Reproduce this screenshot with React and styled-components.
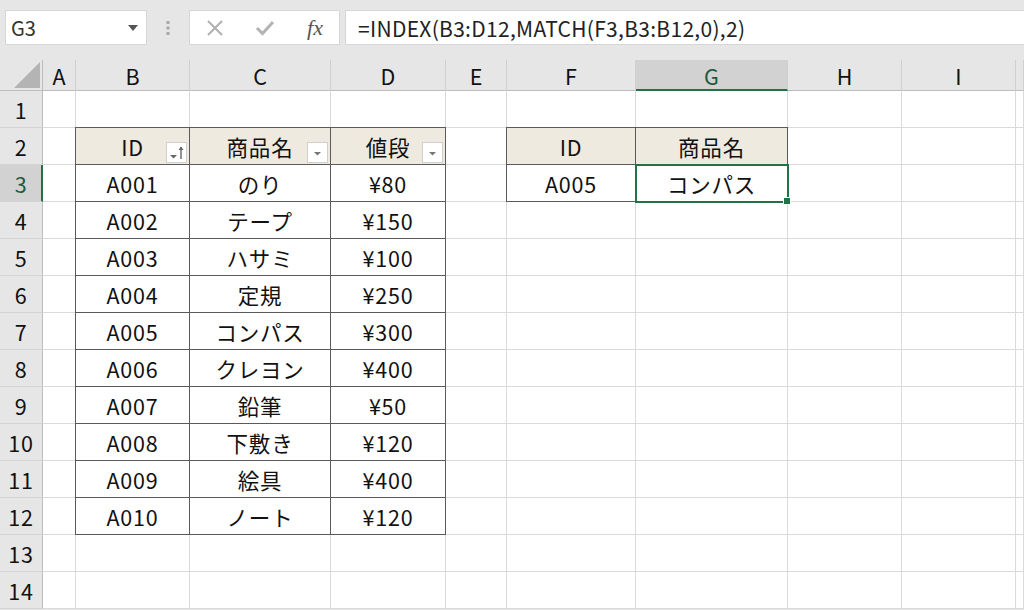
import React from 'react'
import styled, { createGlobalStyle } from 'styled-components'

const GREEN = '#217346'
const GRID = '#dadada'
const EDGE = '#5a5a5a'
const HEAD_BG = '#e6e6e6'

const GlobalStyle = createGlobalStyle`
  html, body { margin: 0; padding: 0; overflow: hidden; background: #fff; }
  body { font-family: "Noto Sans CJK JP", "Noto Sans", sans-serif; color: #111; }
  * { box-sizing: border-box; }
`

const Page = styled.div`
  width: 1024px;
  height: 610px;
  overflow: hidden;
  background: ${HEAD_BG};
`

const Toolbar = styled.div`
  display: flex;
  align-items: flex-start;
  height: 60px;
  padding: 10px 0 0 5px;
`

const NameBox = styled.div`
  width: 142px;
  height: 35px;
  background: #fff;
  border: 1px solid #d6d6d6;
  display: flex;
  align-items: center;
  justify-content: space-between;
  padding: 0 8px 0 5px;
  font-size: 20px;
  color: #333;
`

const Caret = styled.span`
  width: 0;
  height: 0;
  border-left: 5px solid transparent;
  border-right: 5px solid transparent;
  border-top: 6px solid #555;
`

const Grip = styled.div`
  width: 42px;
  height: 35px;
  display: flex;
  align-items: center;
  justify-content: center;
`

const FxBox = styled.div`
  width: 151px;
  height: 35px;
  background: #fff;
  border: 1px solid #d6d6d6;
  display: grid;
  grid-template-columns: repeat(3, 50px);
  justify-items: center;
  align-items: center;
`

const FxLabel = styled.span`
  font-family: "Liberation Serif", "DejaVu Serif", serif;
  font-style: italic;
  font-size: 22px;
  color: #555;
  line-height: 1;
`

const FormulaBox = styled.div`
  flex: 1;
  height: 35px;
  margin-left: 5px;
  background: #fff;
  border: 1px solid #d6d6d6;
  border-right: none;
  display: flex;
  align-items: center;
  padding-left: 12px;
  font-size: 21px;
  color: #222;
  letter-spacing: 0.3px;
`

const Sheet = styled.div`
  display: grid;
  grid-template-columns: 43px 33px 114px 141px 115px 61px 129px 152px 114px 114px 1fr;
  grid-template-rows: 31px repeat(14, 37px);
  background: #fff;
`

const Corner = styled.div`
  background: ${HEAD_BG};
  border-right: 1px solid #bdbdbd;
  border-bottom: 1px solid #bdbdbd;
  display: flex;
  align-items: flex-end;
  justify-content: flex-end;
  padding: 0 2px 2px 0;
`

const ColHead = styled.div`
  background: ${p => (p.$selected ? '#d2d2d2' : HEAD_BG)};
  color: ${p => (p.$selected ? '#1e5b3a' : '#111')};
  border-right: 1px solid #d0d0d0;
  border-bottom: ${p => (p.$selected ? `2px solid ${GREEN}` : '1px solid #bdbdbd')};
  display: flex;
  align-items: center;
  justify-content: center;
  font-size: 21.5px;
  padding-top: ${p => (p.$selected ? '1px' : '0')};
`

const RowHead = styled.div`
  background: ${p => (p.$selected ? '#d2d2d2' : HEAD_BG)};
  color: ${p => (p.$selected ? '#1e5b3a' : '#111')};
  border-right: ${p => (p.$selected ? `2px solid ${GREEN}` : '1px solid #bdbdbd')};
  border-bottom: 1px solid #d4d4d4;
  display: flex;
  align-items: center;
  justify-content: center;
  font-size: 21.5px;
  letter-spacing: 0.8px;
  padding-left: ${p => (p.$selected ? '1px' : '0')};
`

const Cell = styled.div`
  position: relative;
  background: ${p => (p.$fill ? '#eeeadf' : '#fff')};
  border-right: 1px solid ${p => (p.$boxed ? EDGE : GRID)};
  border-bottom: 1px solid ${p => (p.$boxed ? EDGE : GRID)};
  box-shadow: ${p =>
    [p.$edgeLeft && `-1px 0 0 ${EDGE}`, p.$edgeTop && `0 -1px 0 ${EDGE}`, p.$edgeLeft && p.$edgeTop && `-1px -1px 0 ${EDGE}`]
      .filter(Boolean)
      .join(', ') || 'none'};
  z-index: ${p => (p.$active ? 3 : p.$boxed ? 1 : 0)};
  outline: ${p => (p.$active ? `2px solid ${GREEN}` : 'none')};
  outline-offset: -1px;
  display: flex;
  align-items: center;
  justify-content: center;
  font-size: 21.5px;
  letter-spacing: 0.8px;
  color: #111;
`

const FillHandle = styled.span`
  position: absolute;
  right: -4px;
  bottom: -4px;
  width: 6px;
  height: 6px;
  background: ${GREEN};
  border: 1px solid #fff;
  box-sizing: content-box;
`

const FilterButton = styled.span`
  position: absolute;
  right: 2px;
  bottom: 1px;
  width: 21px;
  height: 21px;
  background: #fff;
  border: 1px solid #cfcfcf;
  display: flex;
  align-items: center;
  justify-content: center;
`

const items = [
  ['A001', 'のり', '¥80'],
  ['A002', 'テープ', '¥150'],
  ['A003', 'ハサミ', '¥100'],
  ['A004', '定規', '¥250'],
  ['A005', 'コンパス', '¥300'],
  ['A006', 'クレヨン', '¥400'],
  ['A007', '鉛筆', '¥50'],
  ['A008', '下敷き', '¥120'],
  ['A009', '絵具', '¥400'],
  ['A010', 'ノート', '¥120'],
]

const columns = ['A', 'B', 'C', 'D', 'E', 'F', 'G', 'H', 'I', '']
const tableCols = ['B', 'C', 'D']
const lookupCols = ['F', 'G']
const lookup = { 2: ['ID', '商品名'], 3: ['A005', 'コンパス'] }

function FilterIcon({ sorted }) {
  return (
    <svg width="19" height="19" viewBox="0 0 19 19">
      {sorted ? (
        <>
          <polygon points="3,12 10,12 6.5,15.5" fill="#666" />
          <line x1="14" y1="4" x2="14" y2="16" stroke="#666" strokeWidth="1.4" />
          <polygon points="11.5,7 14,3.5 16.5,7" fill="#666" />
        </>
      ) : (
        <polygon points="6,9 13,9 9.5,12.5" fill="#777" />
      )}
    </svg>
  )
}

function cellData(row, col) {
  if (tableCols.includes(col) && row >= 2 && row <= 12) {
    const i = tableCols.indexOf(col)
    const head = row === 2
    const text = head ? ['ID', '商品名', '値段'][i] : items[row - 3][i]
    return {
      text,
      boxed: true,
      fill: head,
      edgeLeft: i === 0,
      edgeTop: head,
      filter: head ? (i === 0 ? 'sorted' : 'plain') : null,
    }
  }
  if (lookupCols.includes(col) && lookup[row]) {
    const i = lookupCols.indexOf(col)
    return {
      text: lookup[row][i],
      boxed: true,
      fill: row === 2,
      edgeLeft: i === 0,
      edgeTop: row === 2,
      active: row === 3 && col === 'G',
    }
  }
  return {}
}

function XIcon() {
  return (
    <svg width="18" height="18" viewBox="0 0 18 18">
      <path d="M2 2 L16 16 M16 2 L2 16" stroke="#b0b0b0" strokeWidth="2" />
    </svg>
  )
}

function CheckIcon() {
  return (
    <svg width="20" height="18" viewBox="0 0 20 18">
      <path d="M2 9 L7.5 14.5 L18 3" stroke="#b3b3b3" strokeWidth="3" fill="none" />
    </svg>
  )
}

function GripIcon() {
  return (
    <svg width="4" height="16" viewBox="0 0 4 16">
      <rect x="0.5" y="1" width="3" height="3" fill="#a8a8a8" />
      <rect x="0.5" y="6.5" width="3" height="3" fill="#a8a8a8" />
      <rect x="0.5" y="12" width="3" height="3" fill="#a8a8a8" />
    </svg>
  )
}

export default function App() {
  const rows = Array.from({ length: 14 }, (_, i) => i + 1)
  return (
    <Page>
      <GlobalStyle />
      <Toolbar>
        <NameBox>
          <span>G3</span>
          <Caret />
        </NameBox>
        <Grip>
          <GripIcon />
        </Grip>
        <FxBox>
          <XIcon />
          <CheckIcon />
          <FxLabel>fx</FxLabel>
        </FxBox>
        <FormulaBox>=INDEX(B3:D12,MATCH(F3,B3:B12,0),2)</FormulaBox>
      </Toolbar>

      <Sheet>
        <Corner>
          <svg width="26" height="26" viewBox="0 0 26 26">
            <polygon points="26,0 26,26 0,26" fill="#b4b4b4" />
          </svg>
        </Corner>
        {columns.map((c, i) => (
          <ColHead key={`h${i}`} $selected={c === 'G'}>
            {c}
          </ColHead>
        ))}

        {rows.map(r => (
          <React.Fragment key={r}>
            <RowHead $selected={r === 3}>{r}</RowHead>
            {columns.map((c, i) => {
              const d = cellData(r, c)
              return (
                <Cell
                  key={`${r}-${i}`}
                  $boxed={d.boxed}
                  $fill={d.fill}
                  $edgeLeft={d.edgeLeft}
                  $edgeTop={d.edgeTop}
                  $active={d.active}
                >
                  {d.text}
                  {d.filter && (
                    <FilterButton>
                      <FilterIcon sorted={d.filter === 'sorted'} />
                    </FilterButton>
                  )}
                  {d.active && <FillHandle />}
                </Cell>
              )
            })}
          </React.Fragment>
        ))}
      </Sheet>
    </Page>
  )
}
